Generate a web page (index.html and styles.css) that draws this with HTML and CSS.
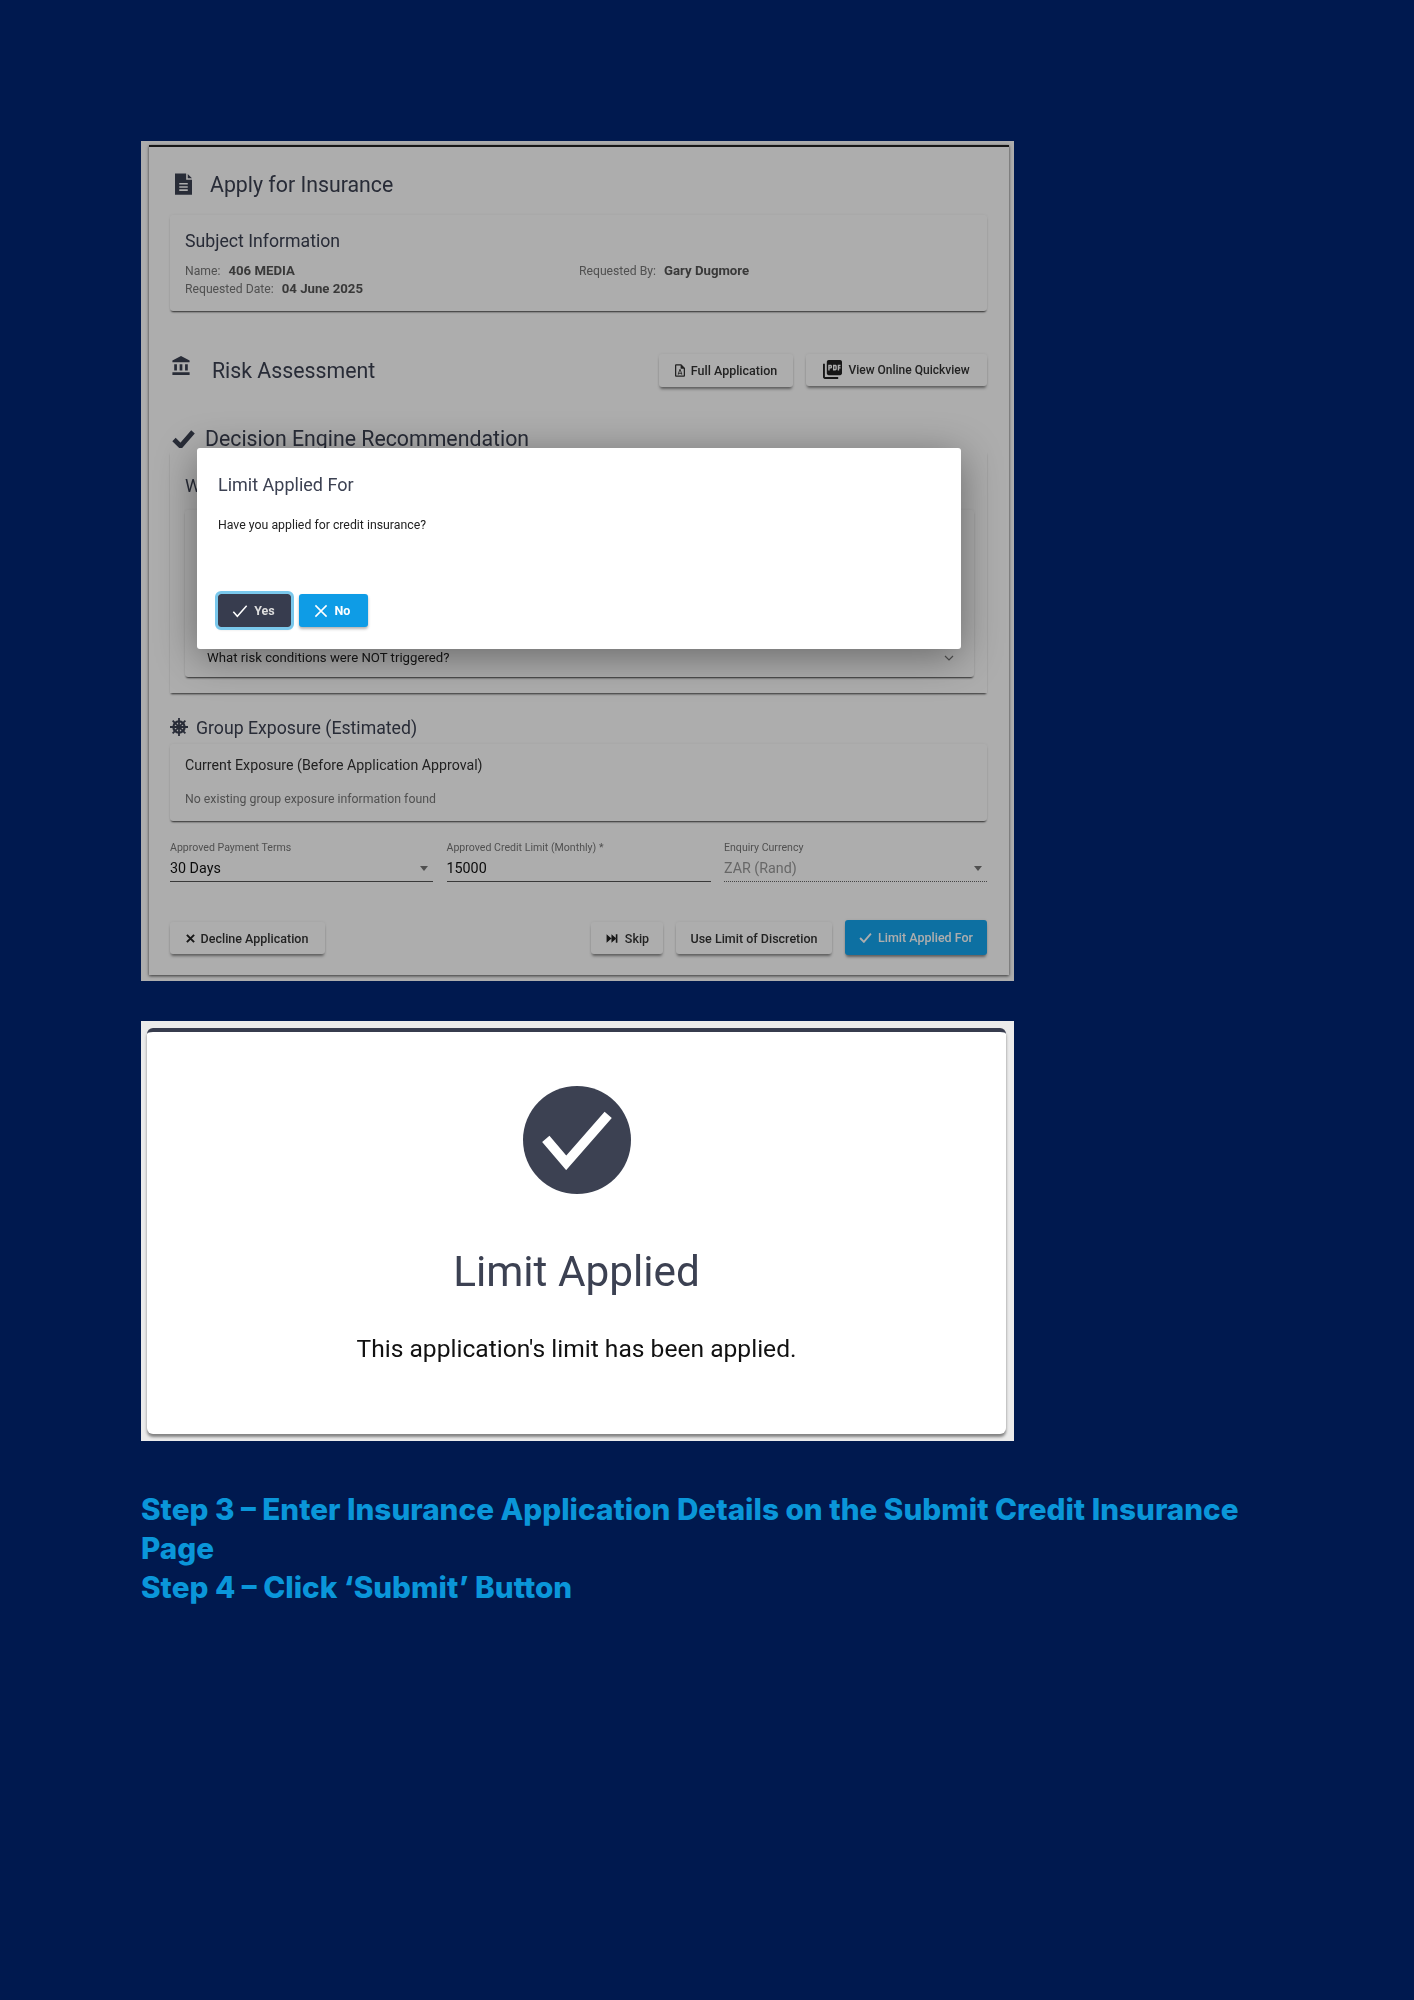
FILE: index.html
```html
<!DOCTYPE html>
<html lang="en">
  <head>
    <meta charset="UTF-8" />
    <title>Step 3 and 4 - Credit Insurance</title>
    <link rel="stylesheet" href="styles.css">
  </head>
  <body>
    <main>
      <section class="shot shotApply">
        <div class="card">
          <div class="titleRow">
            <svg class="iconDoc" viewBox="4 2 16 20"><path fill-rule="evenodd" d="M4 2h10.500v6H20v14H4zM16 2.500L20 6.500h-4zM8 11h8v1.500H8zM8 14h8v1.500H8zM8 17h8v1.500H8z"/></svg>
            <h1>Apply for Insurance</h1>
          </div>

          <div class="panel subjectPanel">
            <h2>Subject Information</h2>
            <div class="infoGrid">
              <div><span class="infoLabel">Name:</span><b>406 MEDIA</b></div>
              <div><span class="infoLabel">Requested By:</span><b>Gary Dugmore</b></div>
              <div><span class="infoLabel">Requested Date:</span><b>04 June 2025</b></div>
            </div>
          </div>

          <div class="riskRow">
            <svg class="iconBank" viewBox="2 1 19 21"><path d="M4 10v7h3v-7H4zm6 0v7h3v-7h-3zM2 22h19v-3H2v3zm14-12v7h3v-7h-3zm-4.5-9L2 6v2h19V6l-9.5-5z"/></svg>
            <h1>Risk Assessment</h1>
            <div class="riskActions">
              <button class="btn btnFull" type="button">
                <svg class="iconSmall" viewBox="4 2 16 20"><path d="M14 2H6c-1.1 0-2 .9-2 2v16c0 1.1.9 2 2 2h12c1.1 0 2-.9 2-2V8l-6-6zm4 18H6V4h7v5h5v11z"/><path d="M9 18l3-8 3 8-3-2z" fill="none" stroke="#333" stroke-width="1.4"/></svg>
                Full Application
              </button>
              <button class="btn btnQuick" type="button">
                <svg class="iconPdf" viewBox="2 2 20 20"><path d="M20 2H8c-1.1 0-2 .9-2 2v12c0 1.1.9 2 2 2h12c1.1 0 2-.9 2-2V4c0-1.1-.9-2-2-2zm-8.5 7.5c0 .83-.67 1.5-1.5 1.5H9v2H7.5V7H10c.83 0 1.5.67 1.5 1.5v1zm5 2c0 .83-.67 1.5-1.5 1.5h-2.5V7H15c.83 0 1.5.67 1.5 1.5v3zm4-3H19v1h1.5V11H19v2h-1.5V7h3v1.5zM9 9.5h1v-1H9v1zM4 6H2v14c0 1.1.9 2 2 2h14v-2H4V6zm10 5.5h1v-3h-1v3z"/></svg>
                View Online Quickview
              </button>
            </div>
          </div>

          <div class="decisionRow">
            <svg class="iconCheckBold" viewBox="0 0 24 20"><path d="M2 11l7 7L22 3" fill="none" stroke="#3c4152" stroke-width="5"/></svg>
            <h1>Decision Engine Recommendation</h1>
          </div>

          <div class="decisionPanel">
            <div class="whyLine">W</div>
            <div class="panel innerPanel">
              <span>What risk conditions were NOT triggered?</span>
              <svg class="iconChevron" viewBox="0 0 10 6"><path d="M1 1l4 4 4-4" fill="none" stroke="#777" stroke-width="1.2"/></svg>
            </div>
          </div>

          <div class="groupRow">
            <svg class="iconWheel" viewBox="0 0 24 24">
              <circle cx="12" cy="12" r="7.5" fill="none" stroke="#3c4152" stroke-width="3"/>
              <circle cx="12" cy="12" r="3"/>
              <path d="M12 0v24M0 12h24M3.5 3.5l17 17M20.500 3.500l-17 17" stroke="#3c4152" stroke-width="2.400"/>
            </svg>
            <h3>Group Exposure (Estimated)</h3>
          </div>

          <div class="panel exposurePanel">
            <h4>Current Exposure (Before Application Approval)</h4>
            <p>No existing group exposure information found</p>
          </div>

          <div class="fields">
            <div class="field">
              <label>Approved Payment Terms</label>
              <div class="fieldValue">30 Days<span class="caret"></span></div>
            </div>
            <div class="field">
              <label>Approved Credit Limit (Monthly) *</label>
              <div class="fieldValue">15000</div>
            </div>
            <div class="field fieldDisabled">
              <label>Enquiry Currency</label>
              <div class="fieldValue">ZAR (Rand)<span class="caret"></span></div>
            </div>
          </div>

          <div class="actions">
            <button class="btn btnDecline" type="button">
              <svg class="iconX" viewBox="0 0 10 10"><path d="M1 1l8 8M9 1l-8 8" stroke="#222" stroke-width="2.200"/></svg>
              Decline Application
            </button>
            <div class="actionsRight">
              <button class="btn btnSkip" type="button">
                <svg class="iconSkip" viewBox="0 0 22 24"><path d="M1 20l9-8-9-8zM10 20l9-8-9-8zM18 4h3v16h-3z"/></svg>
                Skip
              </button>
              <button class="btn btnLimit" type="button">Use Limit of Discretion</button>
              <button class="btn btnPrimary" type="button">
                <svg class="iconTick" viewBox="0 0 24 20"><path d="M2 11l7 7L22 3" fill="none" stroke="#fff" stroke-width="3.500"/></svg>
                Limit Applied For
              </button>
            </div>
          </div>
        </div>

        <div class="overlay"></div>

        <div class="modal">
          <h2>Limit Applied For</h2>
          <p>Have you applied for credit insurance?</p>
          <div class="modalActions">
            <button class="modalBtn modalYes" type="button">
              <svg class="modalIcon" viewBox="0 0 24 20"><path d="M2 11l6 7L22 2" fill="none" stroke="#fff" stroke-width="2.200"/></svg>
              Yes
            </button>
            <button class="modalBtn modalNo" type="button">
              <svg class="modalIcon" viewBox="0 0 20 20"><path d="M2 2l16 16M18 2L2 18" stroke="#fff" stroke-width="2.200"/></svg>
              No
            </button>
          </div>
        </div>
      </section>

      <section class="shot shotDone">
        <div class="doneCard">
          <div class="doneCircle">
            <svg viewBox="0 0 60 50"><path d="M4 24l17 20L56 4" fill="none" stroke="#fff" stroke-width="8"/></svg>
          </div>
          <h2>Limit Applied</h2>
          <p>This application's limit has been applied.</p>
        </div>
      </section>

      <h3 class="steps">
        Step 3 – Enter Insurance Application Details on the Submit Credit Insurance Page<br>
        Step 4 – Click ‘Submit’ Button
      </h3>
    </main>
  </body>
</html>
```

FILE: styles.css
```css
* {
  box-sizing: border-box;
}
body {
  margin: 0;
  background-color: #00194f;
  font-family: Roboto, 'Liberation Sans', sans-serif;
}
main {
  padding: 141px 0 0 141px;
  width: 1273px;
}
h1,
h2,
h3,
h4,
p {
  margin: 0;
  font-weight: 400;
}
button {
  font-family: inherit;
  border: 0;
  cursor: default;
}
svg {
  display: block;
  flex: 0 0 auto;
}

/* screenshots */
.shot {
  position: relative;
  width: 873px;
  background-color: #fff;
}
.shotApply {
  height: 840px;
  padding: 4px 5px 6px 8px;
  overflow: hidden;
}
.card {
  height: 830px;
  background-color: #fff;
  border-top: 2px solid #222;
  padding: 0 22px 0 21px;
  box-shadow: 0 1px 3px rgba(0, 0, 0, 0.7);
  filter: blur(0.5px);
}
.overlay {
  position: absolute;
  inset: 0;
  background-color: rgba(0, 0, 0, 0.32);
}

.titleRow {
  display: flex;
  align-items: center;
  padding: 25px 0 0 5px;
  height: 49px;
  color: #3c4152;
  fill: #3c4152;
}
h1 {
  font-size: 21.3px;
  color: #3c4152;
  white-space: nowrap;
}
.iconDoc {
  width: 17px;
  height: 22px;
  margin-right: 18px;
}
.panel {
  background-color: #fff;
  border-radius: 3px;
  box-shadow: 0 2px 2px -1px rgba(0, 0, 0, 0.75), 0 0 3px rgba(0, 0, 0, 0.06);
}
.subjectPanel {
  height: 96px;
  margin-top: 19px;
  padding: 15px 15px 0;
}
.subjectPanel h2 {
  font-size: 17.700px;
  line-height: 22px;
  color: #3c4152;
}
.infoGrid {
  display: grid;
  grid-template-columns: 394px 1fr;
  margin-top: 10px;
  font-size: 12.200px;
  line-height: 18px;
  color: #666;
}
.infoLabel {
  margin-right: 8px;
  color: #777;
}
.infoGrid b {
  font-size: 13.200px;
  color: #555;
}

.riskRow {
  display: flex;
  align-items: center;
  height: 36px;
  margin-top: 41px;
  padding-left: 2px;
  fill: #3c4152;
}
.iconBank {
  width: 18px;
  height: 19px;
  margin: -10px 22px 0 0;
}
.riskActions {
  display: flex;
  align-items: flex-start;
  gap: 13px;
  margin-left: auto;
}
.btn {
  display: flex;
  align-items: center;
  justify-content: center;
  gap: 6px;
  background-color: #fff;
  color: #333;
  font-size: 12.500px;
  font-weight: 500;
  border-radius: 3px;
  white-space: nowrap;
  box-shadow: 0 3px 3px -1px rgba(0, 0, 0, 0.45), 0 0 3px rgba(0, 0, 0, 0.08);
}
.btnFull {
  width: 134px;
  height: 33px;
  padding-left: 6px;
}
.btnQuick {
  width: 181px;
  height: 32px;
  font-size: 12px;
}
.iconSmall {
  width: 10px;
  height: 13px;
  fill: #333;
}
.iconPdf {
  width: 19px;
  height: 19px;
  fill: #222;
}

.decisionRow {
  display: flex;
  align-items: center;
  height: 26px;
  margin-top: 37px;
  padding-left: 2px;
  gap: 10px;
}
.iconCheckBold {
  width: 23px;
  height: 19px;
}
.decisionPanel {
  position: relative;
  height: 242px;
  margin-top: 0;
  padding: 22px 13px 0 15px;
  box-shadow: 0 2px 2px -1px rgba(0, 0, 0, 0.75);
}
.whyLine {
  font-size: 18px;
  line-height: 26px;
  color: #3c4152;
}
.innerPanel {
  display: flex;
  align-items: flex-end;
  justify-content: space-between;
  height: 167px;
  margin-top: 11px;
  padding: 0 20px 12px 22px;
  font-size: 13.200px;
  color: #222;
}
.iconChevron {
  width: 10px;
  height: 6px;
  margin-bottom: 4px;
}

.groupRow {
  display: flex;
  align-items: center;
  height: 24px;
  margin-top: 23px;
  gap: 8px;
  fill: #3c4152;
}
.iconWheel {
  width: 18px;
  height: 18px;
  margin-top: -3px;
}
.groupRow h3 {
  font-size: 17.700px;
  color: #3c4152;
  white-space: nowrap;
}
.exposurePanel {
  height: 77px;
  margin-top: 4px;
  padding: 12px 15px 0;
}
.exposurePanel h4 {
  font-size: 14.200px;
  line-height: 18px;
  color: #333;
}
.exposurePanel p {
  margin-top: 16px;
  font-size: 12.300px;
  line-height: 18px;
  color: #777;
}

.fields {
  display: grid;
  grid-template-columns: 263px 264px 263px;
  justify-content: space-between;
  margin-top: 20px;
}
.field label {
  display: block;
  font-size: 10.600px;
  line-height: 14px;
  color: #777;
}
.fieldValue {
  display: flex;
  align-items: center;
  justify-content: space-between;
  height: 27px;
  font-size: 14.300px;
  color: #111;
  border-bottom: 1px solid #555;
  padding-right: 5px;
}
.caret {
  width: 0;
  height: 0;
  border-left: 4px solid transparent;
  border-right: 4px solid transparent;
  border-top: 5px solid #777;
}
.fieldDisabled .fieldValue {
  color: #999;
  border-bottom: 1px dotted #666;
}

.actions {
  display: flex;
  justify-content: space-between;
  align-items: flex-start;
  margin-top: 39px;
}
.actionsRight {
  display: flex;
  align-items: flex-start;
  gap: 13px;
}
.btnDecline {
  width: 155px;
  height: 32px;
  margin-top: 1px;
  padding-left: 5px;
}
.iconX {
  width: 9px;
  height: 9px;
}
.btnSkip {
  width: 72px;
  height: 32px;
  margin-top: 1px;
}
.iconSkip {
  width: 14px;
  height: 13px;
  fill: #222;
}
.btnLimit {
  width: 156px;
  height: 32px;
  margin-top: 1px;
}
.btnPrimary {
  width: 142px;
  height: 35px;
  margin-top: -1px;
  background-color: #14a5ef;
  color: #fff;
}
.iconTick {
  width: 13px;
  height: 11px;
}

/* dialog */
.modal {
  position: absolute;
  left: 56px;
  top: 307px;
  width: 764px;
  height: 201px;
  padding: 25px 21px 0;
  background-color: #fff;
  border-radius: 3px;
  box-shadow: 0 8px 40px rgba(0, 0, 0, 0.4);
  filter: blur(0.4px);
}
.modal h2 {
  font-size: 18px;
  line-height: 24px;
  color: #3c4152;
}
.modal p {
  margin-top: 19px;
  font-size: 12.300px;
  line-height: 18px;
  color: #222;
}
.modalActions {
  display: flex;
  align-items: flex-start;
  gap: 8px;
  margin-top: 60px;
}
.modalBtn {
  display: flex;
  align-items: center;
  justify-content: center;
  gap: 6px;
  height: 33px;
  color: #fff;
  font-size: 12.500px;
  font-weight: 700;
  border-radius: 3px;
  box-shadow: 0 2px 3px rgba(0, 0, 0, 0.3);
}
.modalYes {
  width: 73px;
  padding-left: 4px;
  background-color: #373c4e;
  color: #ddd;
  outline: 3px solid #7ac8ec;
}
.modalNo {
  width: 69px;
  padding-left: 2px;
  background-color: #0e9ce6;
}
.modalIcon {
  width: 16px;
  height: 14px;
}

/* limit applied screenshot */
.shotDone {
  height: 420px;
  margin-top: 40px;
  padding: 7px 8px 7px 6px;
  background-color: #ebebeb;
}
.doneCard {
  display: flex;
  flex-direction: column;
  align-items: center;
  height: 406px;
  background-color: #fff;
  border-top: 4px solid #373c4e;
  border-radius: 6px;
  box-shadow: 0 3px 3px rgba(0, 0, 0, 0.45);
  filter: blur(0.5px);
}
.doneCircle {
  display: flex;
  align-items: center;
  justify-content: center;
  width: 108px;
  height: 108px;
  margin-top: 54px;
  border-radius: 50%;
  background-color: #3c4152;
}
.doneCircle svg {
  width: 84px;
  height: 60px;
}
.doneCard h2 {
  margin-top: 50px;
  font-size: 42.300px;
  line-height: 56px;
  color: #3c4152;
}
.doneCard p {
  margin-top: 34px;
  font-size: 24.600px;
  line-height: 30px;
  color: #111;
}

/* step headings */
.steps {
  margin-top: 49px;
  font-family: Inter, 'Open Sans', sans-serif;
  font-size: 29.700px;
  font-weight: 800;
  line-height: 39px;
  color: #0a96d9;
}
```
